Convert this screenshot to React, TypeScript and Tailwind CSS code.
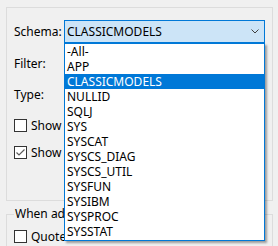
import React from 'react';

const schemas = [
  '-All-',
  'APP',
  'CLASSICMODELS',
  'NULLID',
  'SQLJ',
  'SYS',
  'SYSCAT',
  'SYSCS_DIAG',
  'SYSCS_UTIL',
  'SYSFUN',
  'SYSIBM',
  'SYSPROC',
  'SYSSTAT',
];

// labels under the open dropdown are cut where the list starts (x=64)
const Checkbox: React.FC<{ checked?: boolean; label: string }> = ({ checked, label }) => (
  <div className="flex h-[13px] items-center gap-[4px]">
    <div className="flex h-[13px] w-[13px] shrink-0 items-center justify-center border border-[#333333] bg-white">
      {checked && (
        <svg width="11" height="11" viewBox="0 0 11 11">
          <path d="M1.5 5.5 L4 8 L9.5 2.5" fill="none" stroke="#5a5a5a" strokeWidth="1.2" />
        </svg>
      )}
    </div>
    <span className="w-[33px] overflow-hidden whitespace-nowrap">{label}</span>
  </div>
);

export default function App() {
  const selected = 'CLASSICMODELS';

  return (
    <div
      className="relative h-[246px] w-[278px] overflow-hidden bg-[#f0f0f0] text-[12px] leading-none text-black"
      style={{ fontFamily: '"Segoe UI", "Noto Sans", sans-serif' }}
    >
      <div className="pl-[6px] pt-[7px]">
        <div className="flex h-[194px] w-[267px] flex-col border border-[#dcdcdc] pl-[7px] pt-[12px]">
          <div className="flex items-center">
            <span className="w-[50px]">Schema:</span>
            <div className="flex h-[23px] w-[201px] items-center justify-between border border-[#0078d7] bg-[#cce4f7] pl-[2px] pr-[5px]">
              <span>{selected}</span>
              <svg width="8" height="5" viewBox="0 0 8 5">
                <path d="M0.5 0.5 L4 4 L7.5 0.5" fill="none" stroke="#404040" strokeWidth="1" />
              </svg>
            </div>
          </div>
          <div className="mt-[13px] flex h-[16px] items-center">
            <span className="w-[50px]">Filter:</span>
            <div className="h-[21px] w-[201px] border border-[#7a7a7a] bg-white" />
          </div>
          <div className="mt-[15px] flex h-[16px] items-center">
            <span className="w-[50px]">Type:</span>
            <div className="h-[21px] w-[201px] border border-[#adadad] bg-[#e1e1e1]" />
          </div>
          <div className="mt-[16px] flex flex-col gap-[14px]">
            <Checkbox label="Show synonyms" />
            <Checkbox checked label="Show all objects" />
          </div>
        </div>
        <div className="mt-[13px] h-[40px] w-[267px] border border-[#dcdcdc] pl-[7px]">
          <div className="-mt-[7px] w-[50px] overflow-hidden whitespace-nowrap bg-[#f0f0f0] px-[1px]">
            When adding objects
          </div>
          <div className="mt-[10px]">
            <Checkbox label="Quote identifiers" />
          </div>
        </div>
      </div>

      <div className="absolute left-[64px] top-[43px] w-[201px] border border-[#0078d7] bg-white shadow-[2px_2px_2px_rgba(0,0,0,0.35)]">
        {schemas.map((s) => (
          <div
            key={s}
            className={`flex h-[15px] items-center pl-[2px] ${s === selected ? 'bg-[#0078d7] text-white' : ''}`}
          >
            {s}
          </div>
        ))}
        <div className="h-[1px]" />
      </div>
    </div>
  );
}
